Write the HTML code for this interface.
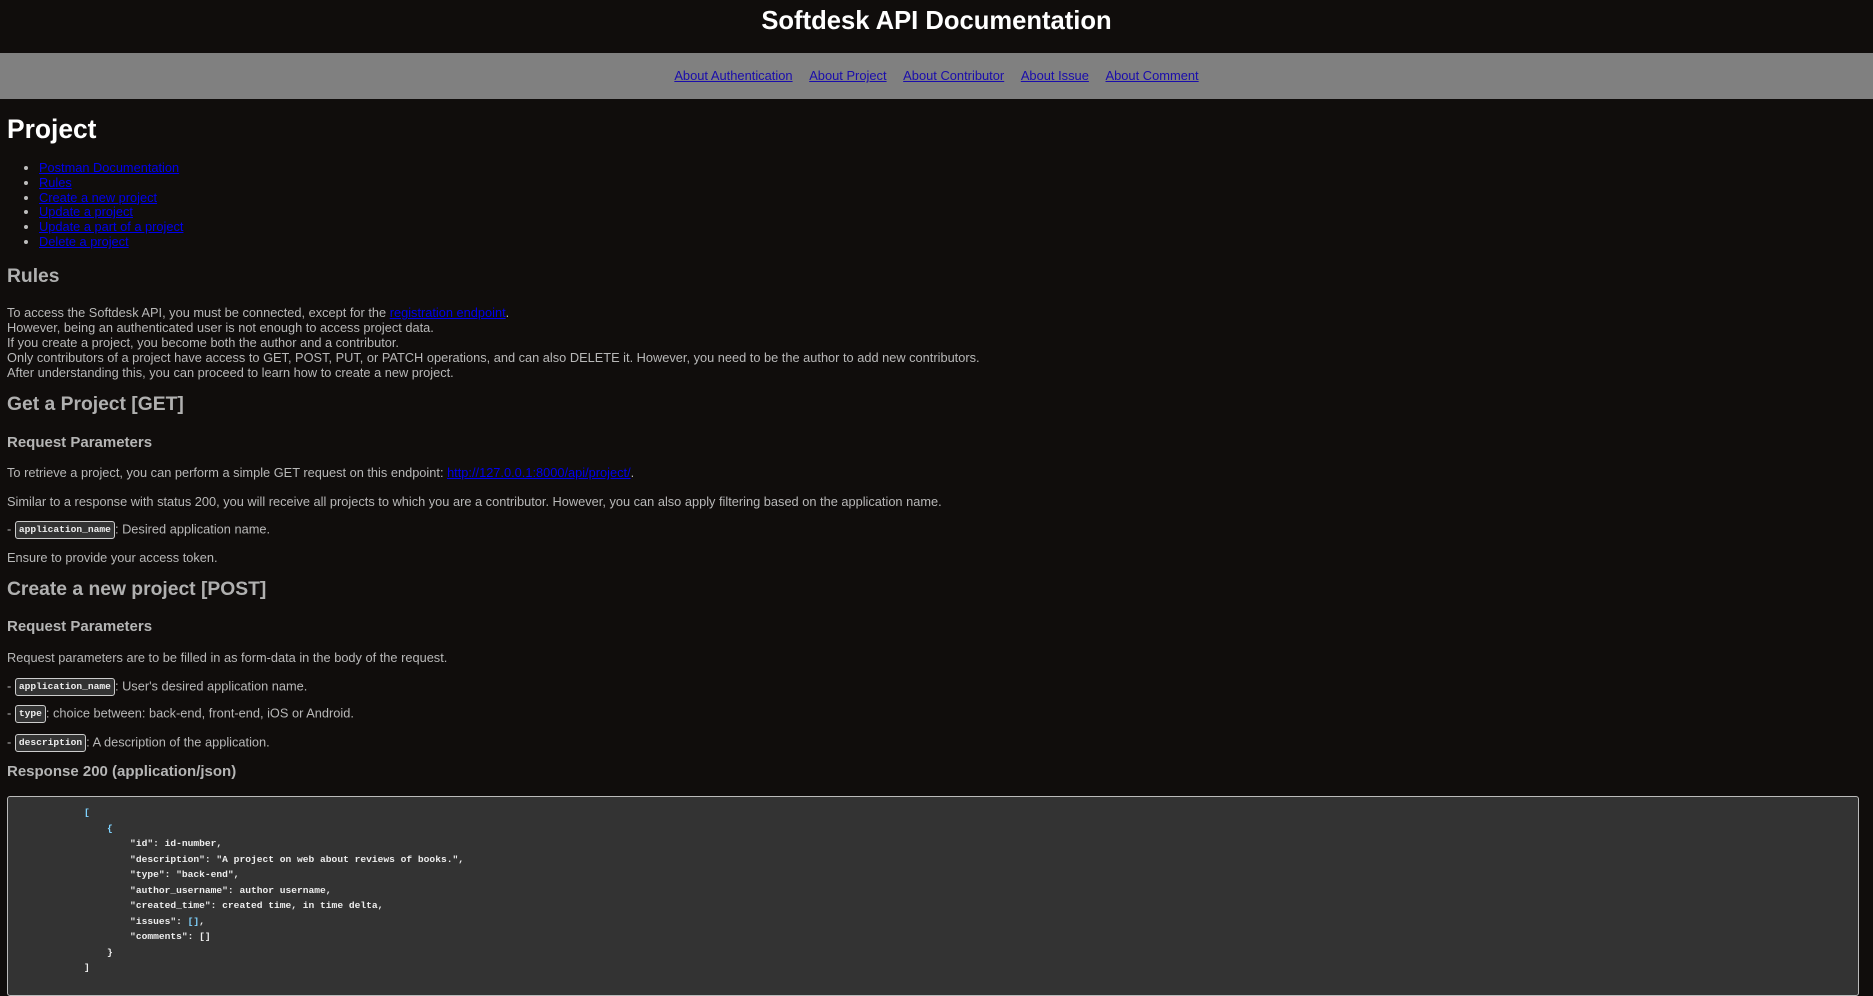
<!DOCTYPE html>
<html><head><meta charset="utf-8"><style>
*{margin:0;padding:0;box-sizing:border-box}
html,body{width:1873px;height:924px;overflow:hidden;background:#100d0c;font-family:"Liberation Sans",Arial,sans-serif;color:#bdbdbd}
.a{position:absolute;white-space:nowrap}
#hdr{position:absolute;left:0;top:0;width:1873px;height:53px;background:#100d0c;text-align:center;color:#fff;font-weight:bold;font-size:25.6px;line-height:42px}
#nav{position:absolute;left:0;top:53px;width:1873px;height:46px;background:#808080;text-align:center;font-size:12.9px;line-height:45px}
#nav a{color:#1a0dab;margin:0 6.5px;text-decoration:underline}
a{color:#0000ee;text-decoration:underline}
h1.a{font-size:26.4px;color:#fff;left:7px;line-height:34px}
h2.a{font-size:19.3px;color:#b0b0b0;left:7px;line-height:24px}
h3.a{font-size:15px;color:#b5b5b5;left:7px;line-height:19px}
p.a{font-size:12.8px;left:7px;line-height:15.1px;color:#b8b8b8}
ul.a{left:39px;font-size:12.8px;line-height:14.8px;list-style:disc;color:#bdbdbd}
code{display:inline-block;font-family:"Liberation Mono",monospace;font-weight:bold;font-size:9.6px;color:#eee;background:#333;border:1px solid #ccc;border-radius:3px;padding:2px 3px;line-height:12px;vertical-align:middle}
#code{position:absolute;left:7px;top:796px;width:1852px;height:200px;background:#333;border:1px solid #bbb;border-radius:3px}
pre{position:absolute;left:76px;top:8px;font-family:"Liberation Mono",monospace;font-size:9.6px;line-height:15.5px;color:#eee;font-weight:bold}
.b{color:#7fd3ff}
</style></head><body>
<div id="hdr">Softdesk API Documentation</div>
<div id="nav"><a>About Authentication</a> <a>About Project</a> <a>About Contributor</a> <a>About Issue</a> <a>About Comment</a></div>
<h1 class="a" style="top:112px">Project</h1>
<ul class="a" style="top:161px">
<li><a>Postman Documentation</a></li>
<li><a>Rules</a></li>
<li><a>Create a new project</a></li>
<li><a>Update a project</a></li>
<li><a>Update a part of a project</a></li>
<li><a>Delete a project</a></li>
</ul>
<h2 class="a" style="top:265px">Rules</h2>
<p class="a" style="top:305px">To access the Softdesk API, you must be connected, except for the <a>registration endpoint</a>.<br>However, being an authenticated user is not enough to access project data.<br>If you create a project, you become both the author and a contributor.<br>Only contributors of a project have access to GET, POST, PUT, or PATCH operations, and can also DELETE it. However, you need to be the author to add new contributors.<br>After understanding this, you can proceed to learn how to create a new project.</p>
<h2 class="a" style="top:393px">Get a Project [GET]</h2>
<h3 class="a" style="top:433px">Request Parameters</h3>
<p class="a" style="top:465px">To retrieve a project, you can perform a simple GET request on this endpoint: <a>http://127.0.0.1:8000/api/project/</a>.</p>
<p class="a" style="top:494px">Similar to a response with status 200, you will receive all projects to which you are a contributor. However, you can also apply filtering based on the application name.</p>
<p class="a" style="top:521px">- <code>application_name</code>: Desired application name.</p>
<p class="a" style="top:550px">Ensure to provide your access token.</p>
<h2 class="a" style="top:578px">Create a new project [POST]</h2>
<h3 class="a" style="top:617px">Request Parameters</h3>
<p class="a" style="top:650px">Request parameters are to be filled in as form-data in the body of the request.</p>
<p class="a" style="top:678px">- <code>application_name</code>: User's desired application name.</p>
<p class="a" style="top:705px">- <code>type</code>: choice between: back-end, front-end, iOS or Android.</p>
<p class="a" style="top:734px">- <code>description</code>: A description of the application.</p>
<h3 class="a" style="top:762px">Response 200 (application/json)</h3>
<div id="code"><pre><span class="b">[</span>
    <span class="b">{</span>
        "id": id-number,
        "description": "A project on web about reviews of books.",
        "type": "back-end",
        "author_username": author username,
        "created_time": created time, in time delta,
        "issues": <span class="b">[]</span>,
        "comments": []
    }
]</pre></div>
</body></html>
